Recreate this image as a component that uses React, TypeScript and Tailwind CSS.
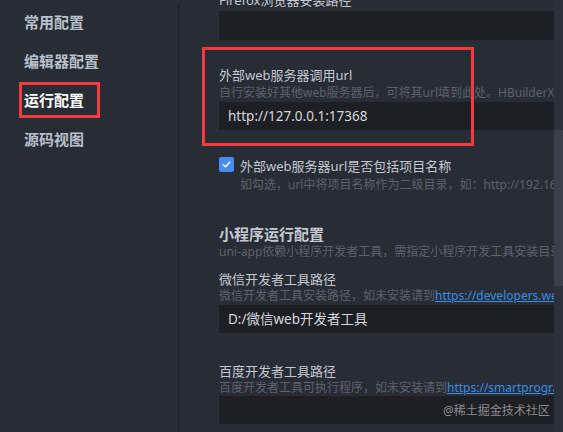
import React from 'react';

const font = "font-['Noto_Sans','Noto_Sans_CJK_SC',sans-serif]";

const menu = [
  { label: '常用配置', active: false },
  { label: '编辑器配置', active: false },
  { label: '运行配置', active: true },
  { label: '源码视图', active: false },
];

const Input: React.FC<{ value?: string; h?: string }> = ({ value, h = 'h-[28px]' }) => (
  <div className={`${h} bg-[#1e1f24] flex items-center pl-[9px] text-[13.5px] text-[#d4d7dd] whitespace-nowrap overflow-hidden`}>
    {value}
  </div>
);

const App: React.FC = () => {
  return (
    <div className={`${font} relative w-[563px] h-[432px] bg-[#282c34] flex overflow-hidden`}>
      {/* sidebar */}
      <aside className="w-[179px] shrink-0 mt-[3px] border-r border-[#1c1e23] pt-[8px] pl-[24px]">
        {menu.map((m) => (
          <div
            key={m.label}
            className={`h-[39px] text-[15px] leading-[22px] font-bold ${m.active ? 'text-white' : 'text-[#b8c0cc]'}`}
          >
            {m.label}
          </div>
        ))}
      </aside>

      {/* settings body */}
      <main className="flex-1 flex min-w-0">
        <div className="flex-1 min-w-0 pl-[40px] overflow-hidden">
          <div className="-mt-[9px] text-[13px] leading-[18px] text-[#c3c8d1] whitespace-nowrap">Firefox浏览器安装路径</div>
          <div className="mt-[2px]">
            <Input h="h-[29px]" />
          </div>

          <div className="mt-[26px] text-[13px] leading-[18px] text-[#c3c8d1] whitespace-nowrap">外部web服务器调用url</div>
          <div className="text-[12px] leading-[18px] text-[#5d626d] whitespace-nowrap">
            自行安装好其他web服务器后，可将其url填到此处。HBuilderX
          </div>
          <Input value="http://127.0.0.1:17368" />

          <div className="mt-[26px] flex">
            <div className="w-[15px] h-[15px] mt-[1px] shrink-0 rounded-[2px] bg-[#4a8cf6] flex items-center justify-center">
              <svg width="11" height="11" viewBox="0 0 12 12" fill="none">
                <path d="M2.5 6.2 L5 8.5 L9.5 3.5" stroke="#ffffff" strokeWidth="1.6" strokeLinecap="round" strokeLinejoin="round" />
              </svg>
            </div>
            <div className="ml-[6px] min-w-0">
              <div className="text-[13px] leading-[20px] text-[#c3c8d1] whitespace-nowrap">外部web服务器url是否包括项目名称</div>
              <div className="text-[12px] leading-[18px] text-[#5d626d] whitespace-nowrap">
                如勾选，url中将项目名称作为二级目录，如：http://192.168.1.1:8080/project/
              </div>
            </div>
          </div>

          <div className="mt-[30px] text-[15px] leading-[20px] font-bold text-[#c3c8d1] whitespace-nowrap">小程序运行配置</div>
          <div className="text-[12px] leading-[16px] text-[#5d626d] whitespace-nowrap">
            uni-app依赖小程序开发者工具，需指定小程序开发工具安装目录
          </div>

          <div className="mt-[10px] text-[13px] leading-[18px] text-[#c3c8d1] whitespace-nowrap">微信开发者工具路径</div>
          <div className="text-[12px] leading-[16px] text-[#5d626d] whitespace-nowrap">
            微信开发者工具安装路径，如未安装请到<span className="text-[#3a8ee6] underline">https://developers.weixin.qq.com</span>
          </div>
          <div className="mt-[1px]">
            <Input value="D:/微信web开发者工具" />
          </div>

          <div className="mt-[29px] text-[13px] leading-[18px] text-[#c3c8d1] whitespace-nowrap">百度开发者工具路径</div>
          <div className="text-[12px] leading-[16px] text-[#5d626d] whitespace-nowrap">
            百度开发者工具可执行程序，如未安装请到<span className="text-[#3a8ee6] underline">https://smartprogram.baidu.com</span>
          </div>
          <Input />
        </div>

        {/* scrollbar */}
        <div className="w-[9px] shrink-0 bg-[#2c3039] pt-[130px]">
          <div className="h-[156px] bg-[#3a3f4a]" />
        </div>
      </main>

      {/* annotation boxes */}
      <div className="absolute left-[19px] top-[82px] w-[81px] h-[36px] border-[3px] border-[#f53b3b]" />
      <div className="absolute left-[202px] top-[47px] w-[272px] h-[99px] border-[3px] border-[#f53b3b]" />

      {/* watermark */}
      <div className="absolute left-[443px] top-[403px] text-[12px] leading-[16px] text-[#8a8c90] whitespace-nowrap">
        @稀土掘金技术社区
      </div>
    </div>
  );
};

export default App;
